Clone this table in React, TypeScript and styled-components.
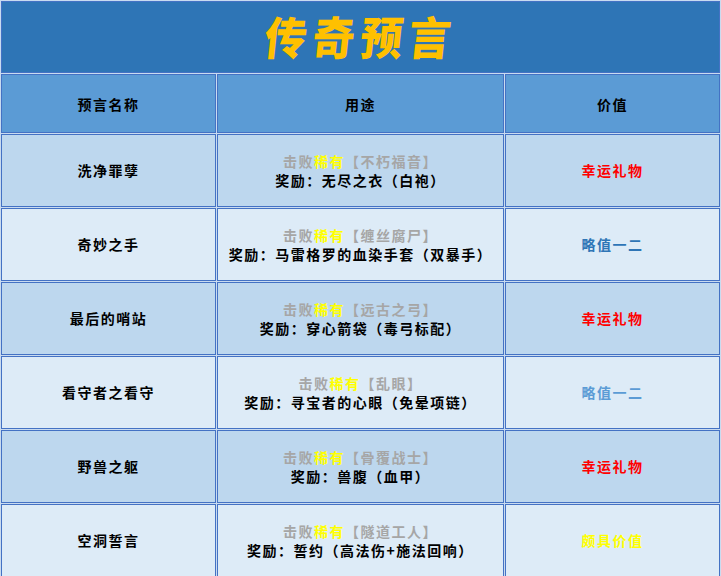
import React from 'react';
import styled, {createGlobalStyle} from "styled-components";

const GlobalStyle = createGlobalStyle`
  html, body {
    margin: 0;
    padding: 0;
    background: #ffffff;
  }

  body {
    font-family: "Noto Sans CJK SC", "Noto Sans", sans-serif;
  }
`

type Tone = 'odd' | 'even'

const Sheet = styled.div`
  width: 721px;
  height: 576px;
  overflow: hidden;
  padding-top: 1px;
  box-sizing: border-box;
  background: #ffffff;
`

const Table = styled.table`
  width: 721px;
  border-collapse: separate;
  border-spacing: 1px;
  background: #c9dbf0;
  table-layout: fixed;
  margin-top: -1px;
`

const TitleCell = styled.td`
  height: 70px;
  padding: 0;
  background: #2e75b6;
  border: 1px solid #4472c4;
  text-align: center;
`

const TitleText = styled.span`
  display: inline-block;
  font-family: "Noto Sans CJK SC", sans-serif;
  font-weight: 900;
  font-size: 42px;
  letter-spacing: 6px;
  color: #ffc000;
  transform: skewX(-6deg) scaleY(1.08);
  line-height: 1;
`

const HeadCell = styled.th`
  height: 57px;
  padding: 0;
  background: #5b9bd5;
  border: 1px solid #4472c4;
  font-size: 14px;
  font-weight: 700;
  letter-spacing: 1.5px;
  color: #000000;
  text-align: center;
`

const Cell = styled.td<{ $tone: Tone }>`
  height: 71px;
  padding: 0;
  background: ${({$tone}) => $tone === 'odd' ? '#bdd7ee' : '#ddebf7'};
  border: 1px solid #4472c4;
  text-align: center;
  vertical-align: middle;
  font-size: 14px;
  font-weight: 700;
  letter-spacing: 1.5px;
  line-height: 19px;
  color: #000000;
`

const Gray = styled.span`
  color: #a6a6a6;
`

const Rare = styled.span`
  color: #ffff00;
`

const Value = styled.span<{ $color: string }>`
  color: ${({$color}) => $color};
`

type Row = {
    name: string
    boss: string
    reward: string
    value: string
    color: string
}

const rows: Row[] = [
    {name: '洗净罪孽', boss: '【不朽福音】', reward: '奖励：无尽之衣（白袍）', value: '幸运礼物', color: '#ff0000'},
    {name: '奇妙之手', boss: '【缠丝腐尸】', reward: '奖励：马雷格罗的血染手套（双暴手）', value: '略值一二', color: '#2e75b6'},
    {name: '最后的哨站', boss: '【远古之弓】', reward: '奖励：穿心箭袋（毒弓标配）', value: '幸运礼物', color: '#ff0000'},
    {name: '看守者之看守', boss: '【乱眼】', reward: '奖励：寻宝者的心眼（免晕项链）', value: '略值一二', color: '#5b9bd5'},
    {name: '野兽之躯', boss: '【骨覆战士】', reward: '奖励：兽腹（血甲）', value: '幸运礼物', color: '#ff0000'},
    {name: '空洞誓言', boss: '【隧道工人】', reward: '奖励：誓约（高法伤+施法回响）', value: '颇具价值', color: '#ffff00'},
]

const App = () => {
    return (
        <>
            <GlobalStyle/>
            <Sheet>
                <Table>
                    <colgroup>
                        <col style={{width: 215}}/>
                        <col style={{width: 287}}/>
                        <col style={{width: 215}}/>
                    </colgroup>
                    <tbody>
                    <tr>
                        <TitleCell colSpan={3}><TitleText>传奇预言</TitleText></TitleCell>
                    </tr>
                    <tr>
                        <HeadCell>预言名称</HeadCell>
                        <HeadCell>用途</HeadCell>
                        <HeadCell>价值</HeadCell>
                    </tr>
                    {rows.map((row, i) => {
                        const tone: Tone = i % 2 === 0 ? 'odd' : 'even'
                        return (
                            <tr key={row.name}>
                                <Cell $tone={tone}>{row.name}</Cell>
                                <Cell $tone={tone}>
                                    <Gray>击败</Gray><Rare>稀有</Rare><Gray>{row.boss}</Gray>
                                    <br/>
                                    {row.reward}
                                </Cell>
                                <Cell $tone={tone}><Value $color={row.color}>{row.value}</Value></Cell>
                            </tr>
                        )
                    })}
                    </tbody>
                </Table>
            </Sheet>
        </>
    )
};

export default App;
